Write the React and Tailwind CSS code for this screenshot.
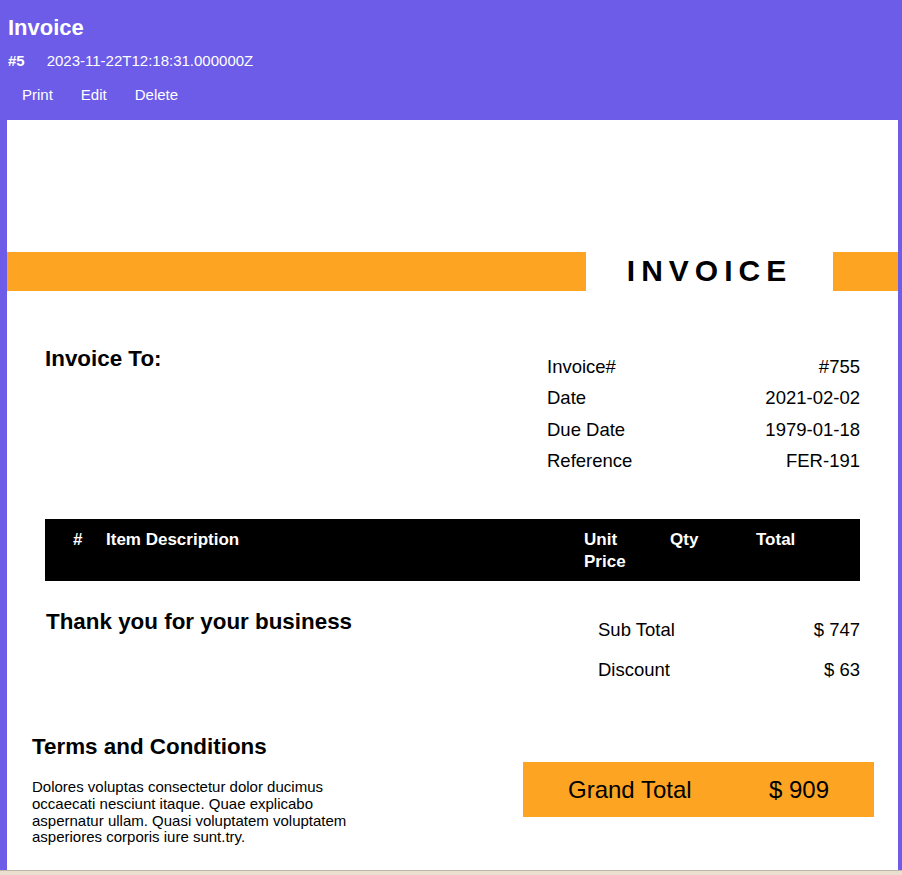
const ORANGE = 'bg-[#fea423]'

const details = [
  ['Invoice#', '#755'],
  ['Date', '2021-02-02'],
  ['Due Date', '1979-01-18'],
  ['Reference', 'FER-191'],
]

const totals = [
  ['Sub Total', '$ 747'],
  ['Discount', '$ 63'],
]

export default function App() {
  return (
    <div className="min-h-screen bg-[#6c5ce7] font-['Liberation_Sans',Arial,sans-serif] text-black">
      <header className="px-[8px] pt-[15px] pb-[11px] text-white">
        <h1 className="text-[22px] font-bold leading-[25px]">Invoice</h1>
        <div className="mt-[12px] flex text-[15px] leading-[17px]">
          <span className="font-bold">#5</span>
          <span className="ml-[22px]">2023-11-22T12:18:31.000000Z</span>
        </div>
        <nav className="mt-[11px] flex text-[15px] leading-[17px]">
          <button type="button" className="px-[14px] py-[6px]">Print</button>
          <button type="button" className="px-[14px] py-[6px]">Edit</button>
          <button type="button" className="px-[14px] py-[6px]">Delete</button>
        </nav>
      </header>

      <main className="ml-[7px] mr-[4px] bg-white pt-[132px] pb-[40px]">
        {/* banner */}
        <div className="flex h-[39px]">
          <div className={`w-[579px] ${ORANGE}`} />
          <div className="flex-1 text-center text-[30px] font-bold leading-[38px] tracking-[6px]">INVOICE</div>
          <div className={`w-[65px] ${ORANGE}`} />
        </div>

        {/* bill to + meta */}
        <section className="mt-[55px] flex items-start justify-between px-[38px]">
          <h2 className="text-[22.4px] font-bold leading-[25px]">Invoice To:</h2>
          <dl className="mt-[5px] w-[313px] text-[18.5px] leading-[31.3px]">
            {details.map(([k, v]) => (
              <div key={k} className="flex justify-between">
                <dt>{k}</dt>
                <dd>{v}</dd>
              </div>
            ))}
          </dl>
        </section>

        {/* items header */}
        <div className="mx-[38px] mt-[43px] flex bg-black pt-[10px] pb-[8px] text-[17px] font-bold leading-[22px] text-white">
          <div className="w-[28px] shrink-0" />
          <div className="w-[33px] shrink-0">#</div>
          <div className="flex-1">Item Description</div>
          <div className="w-[86px] shrink-0 pr-[12px]">Unit Price</div>
          <div className="w-[86px] shrink-0">Qty</div>
          <div className="w-[104px] shrink-0">Total</div>
        </div>

        {/* thanks + totals */}
        <section className="mt-[28px] flex items-start justify-between px-[38px]">
          <h2 className="pl-[1px] text-[22.4px] font-bold leading-[25px]">Thank you for your business</h2>
          <div className="mt-[1px] w-[262px] text-[18.5px] leading-[40px]">
            {totals.map(([k, v]) => (
              <div key={k} className="flex justify-between">
                <span>{k}</span>
                <span>{v}</span>
              </div>
            ))}
          </div>
        </section>

        {/* terms + grand total */}
        <section className="mt-[44px] flex items-start justify-between pl-[25px] pr-[24px]">
          <div className="w-[340px]">
            <h2 className="text-[22.4px] font-bold leading-[25px]">Terms and Conditions</h2>
            <p className="mt-[20px] text-[15px] leading-[16.67px]">
              Dolores voluptas consectetur dolor ducimus occaecati nesciunt itaque. Quae explicabo aspernatur ullam. Quasi voluptatem voluptatem asperiores corporis iure sunt.try.
            </p>
          </div>
          <div className={`mt-[28px] flex h-[55px] w-[351px] items-center justify-between px-[45px] text-[24px] ${ORANGE}`}>
            <span>Grand Total</span>
            <span>$ 909</span>
          </div>
        </section>
      </main>

      <div className="fixed inset-x-0 bottom-0 h-[5px] border-t border-[#bdb5aa] bg-[#ebe0d0]" />
    </div>
  )
}
